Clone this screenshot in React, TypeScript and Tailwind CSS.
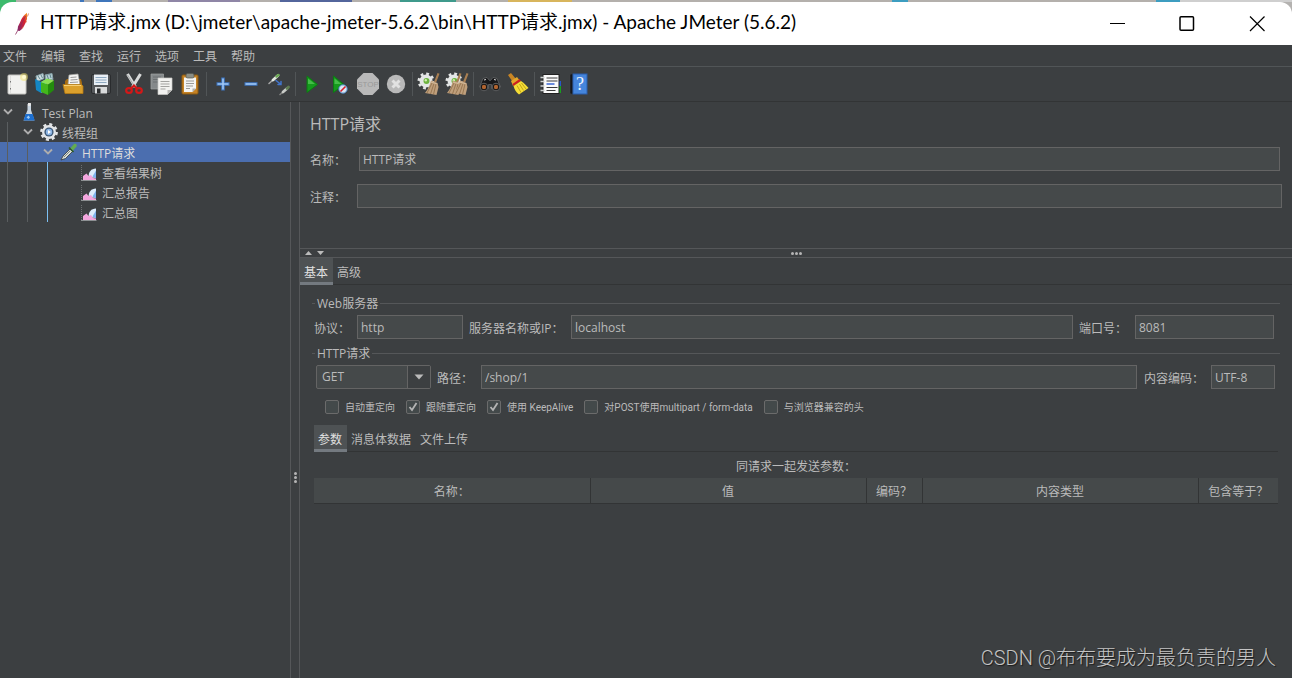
import React, { ReactNode } from 'react'
import { clsx } from 'clsx'

const menuItems = ['文件', '编辑', '查找', '运行', '选项', '工具', '帮助']

type TreeNode = {
  label: string
  depth: number
  icon: ReactNode
  leaf?: boolean
  selected?: boolean
}

const Feather = () => (
  <svg viewBox="0 0 16 24" className="h-6 w-4" aria-hidden="true">
    <defs>
      <linearGradient id="feather" x1="1" y1="0" x2="0" y2="1">
        <stop offset="0" stopColor="#f6a21c" />
        <stop offset="0.35" stopColor="#dd2430" />
        <stop offset="1" stopColor="#7b2470" />
      </linearGradient>
    </defs>
    <path
      d="M13 .8L11 2.500 9.500 4 7.500 7 6 10.500l-2 4-.5 4 2 .5 2.500-2 2-3 1.500-3 1.500-4z"
      fill="url(#feather)"
    />
    <path d="M11.500 4C8 11 4.500 17 1.500 22.500" stroke="#8c2b5c" strokeWidth="0.8" fill="none" />
    <path d="M14.500 1.500l-1 3M12.500 9l-1 2M9.500 14.500l-1.500 2" stroke="#e0663c" strokeWidth="0.8" />
  </svg>
)

const Broom = () => (
  <g>
    <path d="M20.500 1l2 .8-3.500 9-2-.8z" fill="#a97f52" />
    <path d="M14 8.500l6.500 2.500 1 4-2 8-11.500-2c3-3.500 4.500-7 6-12.500z" fill="#bf9f7c" />
    <path
      d="M15 11l-5 10M17 11.500l-3.500 10.500M19 12l-2.500 10.500"
      stroke="#86653f"
      strokeWidth="0.7"
    />
    <path d="M13.800 10l6.500 2" stroke="#d9c2a2" strokeWidth="0.8" />
  </g>
)

const Gear = () => (
  <g>
    <circle cx="9" cy="9" r="6.500" fill="#e4e6e6" />
    <circle
      cx="9"
      cy="9"
      r="7.200"
      fill="none"
      stroke="#e4e6e6"
      strokeWidth="2.600"
      strokeDasharray="2.800 2.850"
    />
    <circle cx="9.500" cy="9" r="3" fill="#6db33f" />
    <circle cx="8.800" cy="8.200" r="1.200" fill="#d0efb0" />
  </g>
)

const toolGroups: { name: string; art: ReactNode }[][] = [
  [
    {
      name: '新建',
      art: (
        <g>
          <rect x="3" y="3" width="18" height="19" rx="1" fill="#f1f1ef" stroke="#c4c4c0" />
          <path d="M5.500 4v17" stroke="#dededc" />
          <path d="M5.500 9v1.500M5.500 16v1.500" stroke="#777" />
          <circle cx="19" cy="5" r="4" fill="#f4e66b" opacity="0.5" />
          <circle cx="19" cy="5" r="2" fill="#fffbd0" />
        </g>
      ),
    },
    {
      name: '模板',
      art: (
        <g>
          <path d="M3 4l7-2.500 1 5-7 3z" fill="#cfdde0" stroke="#87a2a8" />
          <path d="M12 3l7-1.500 1 6-7 1z" fill="#b9d0d5" stroke="#87a2a8" />
          <path d="M5 4l2 3M8 3l1.500 3M14 3l1.500 4M17 2.500L18 6" stroke="#5f868e" />
          <path d="M2 7l6 3v11l-5-3z" fill="#1487c4" />
          <path d="M8 10l5-3v11l-5 3z" fill="#4cb9e8" />
          <path d="M8 10l7 2.500V23l-7-3z" fill="#43b61c" />
          <path d="M15 12.500l6-4V18l-6 5z" fill="#238b0d" />
          <path d="M8 10l6-3.500 7 2-6 4z" fill="#8be052" />
        </g>
      ),
    },
    {
      name: '打开',
      art: (
        <g>
          <path d="M4 9l2-2h14l1 4v9H4z" fill="#a86d11" />
          <path d="M8 3l9-1 2 11H7z" fill="#f5f5f3" stroke="#a9a9a5" strokeWidth="0.7" />
          <path d="M9.500 5.500l6-.5M9.500 8l7-.5M9 10.500l8-.5" stroke="#999" />
          <path d="M2 12.500h18.500L22 14v7.500H4z" fill="#dba02c" stroke="#b67b13" strokeWidth="0.8" />
          <path d="M3 13.500h17" stroke="#f6cf75" />
        </g>
      ),
    },
    {
      name: '保存',
      art: (
        <g>
          <rect x="2.500" y="2.500" width="19" height="19" rx="1.500" fill="#55585b" stroke="#2a2c2e" />
          <path d="M5 2.500h14V13H5z" fill="#e9eff5" />
          <path d="M6.500 5.500h11M6.500 8h11M6.500 10.500h11" stroke="#8faac2" />
          <path d="M6 15h12v6.500H6z" fill="#d9dbdc" />
          <path d="M8 16.500h3.500v5H8z" fill="#2b2d2f" />
        </g>
      ),
    },
  ],
  [
    {
      name: '剪切',
      art: (
        <g fill="none">
          <path d="M5.500 2l8 13M18.500 2L10.500 15" stroke="#d9dbdb" strokeWidth="3" />
          <path d="M5.500 3l7.500 12" stroke="#8e9191" strokeWidth="0.7" />
          <ellipse cx="7" cy="18.500" rx="2.800" ry="2.400" stroke="#d31818" strokeWidth="2.200" />
          <ellipse cx="17" cy="18.500" rx="2.800" ry="2.400" stroke="#d31818" strokeWidth="2.200" />
          <path d="M9 16.500l3-3 3 3" stroke="#d31818" strokeWidth="2.200" />
        </g>
      ),
    },
    {
      name: '复制',
      art: (
        <g>
          <path d="M1 2h12.500v15H1z" fill="#85898b" stroke="#a0a3a3" strokeWidth="0.7" />
          <path d="M3 5h8M3 7.500h8M3 10h5" stroke="#6c7072" />
          <path d="M8 6h14v12l-4.500 4.500H8z" fill="#f2f2f0" stroke="#c9c9c6" strokeWidth="0.7" />
          <path d="M10.500 9.500h9M10.500 12h9M10.500 14.500h9M10.500 17h5" stroke="#a3a3a1" />
          <path d="M22 18h-4.500v4.500z" fill="#b6b6b4" />
        </g>
      ),
    },
    {
      name: '粘贴',
      art: (
        <g>
          <rect x="4" y="3" width="16" height="19" rx="1" fill="#c58224" stroke="#8d5a10" />
          <path d="M6 5.500h12v11L14.500 20H6z" fill="#f4f4f2" />
          <path d="M8 9h8M8 11.500h8M8 14h7M8 16.500h4" stroke="#9a9a98" />
          <path d="M18 16.500h-3.500V20z" fill="#adadab" />
          <rect x="8" y="1.500" width="8" height="4.500" rx="1.500" fill="#8b8e86" stroke="#55574f" strokeWidth="0.7" />
        </g>
      ),
    },
  ],
  [
    {
      name: '展开全部',
      art: (
        <g>
          <path d="M12 5.500v13M5.500 12h13" stroke="#3d74bd" strokeWidth="3.600" />
          <path d="M12 6.500v11M6.500 12h11" stroke="#9fc8f7" strokeWidth="1.600" />
        </g>
      ),
    },
    {
      name: '折叠全部',
      art: (
        <g>
          <path d="M5.500 12h13" stroke="#3d74bd" strokeWidth="3.600" />
          <path d="M6.500 12h11" stroke="#9fc8f7" strokeWidth="1.600" />
        </g>
      ),
    },
    {
      name: '切换',
      art: (
        <g strokeLinecap="round">
          <path d="M2 11.500l4.500-4" stroke="#aaa" strokeWidth="1.500" />
          <path d="M6 8l5-4.500" stroke="#e3e8e1" strokeWidth="2.800" />
          <path d="M9.500 4.500L11.500 3" stroke="#6daa55" strokeWidth="2.500" />
          <path d="M9 8.500l5 4M14 9.500v3h-3" stroke="#4275cc" strokeWidth="1.500" fill="none" />
          <path d="M13 22.500l3-2.500" stroke="#888" strokeWidth="1.500" />
          <path d="M16 20l4-3.500" stroke="#c8cbc7" strokeWidth="2.800" />
          <path d="M20 16.500l1.500-1.500" stroke="#5f7d52" strokeWidth="2.800" />
        </g>
      ),
    },
  ],
  [
    {
      name: '启动',
      art: (
        <g>
          <path d="M7 4l10.500 8.500L7 20.500z" fill="#159a1d" stroke="#0c7a13" />
          <path d="M8 6.500l7 5.500H8z" fill="#45bd48" />
        </g>
      ),
    },
    {
      name: '不停顿开始',
      art: (
        <g>
          <path d="M5.500 4L16 12.500 5.500 20.500z" fill="#159a1d" stroke="#0c7a13" />
          <path d="M6.500 6.500l7 5.500h-7z" fill="#45bd48" />
          <circle cx="15" cy="17" r="4.200" fill="#d9e7f4" stroke="#4a83c0" strokeWidth="1" />
          <path d="M12.500 19.500l5-5" stroke="#d8202a" strokeWidth="1.600" />
        </g>
      ),
    },
    {
      name: '停止',
      art: (
        <g>
          <path d="M7.500 1h9L23 7.500v9L16.500 23h-9L1 16.500v-9z" fill="#b9b9b9" />
          <text
            x="12"
            y="15"
            textAnchor="middle"
            fontSize="8"
            fontFamily="Liberation Sans, sans-serif"
            fill="#999"
          >
            STOP
          </text>
        </g>
      ),
    },
    {
      name: '关闭',
      art: (
        <g>
          <circle cx="12" cy="12" r="9.200" fill="#b9b9b9" />
          <path d="M8.500 8.500l7 7M15.500 8.500l-7 7" stroke="#e2e2e2" strokeWidth="3" />
        </g>
      ),
    },
  ],
  [
    {
      name: '清除',
      art: (
        <g>
          <Gear />
          <Broom />
        </g>
      ),
    },
    {
      name: '清除全部',
      art: (
        <g>
          <Gear />
          <g transform="translate(-6 0)">
            <Broom />
          </g>
          <g transform="translate(1 0)">
            <Broom />
          </g>
        </g>
      ),
    },
  ],
  [
    {
      name: '查找',
      art: (
        <g>
          <path d="M5 6.500l4-1 2.500 3h1l2.500-3 4 1L22.500 15l-9 1.500v-4h-3v4l-9-1.500z" fill="#17181a" stroke="#6b6d6f" strokeWidth="0.7" />
          <circle cx="6" cy="15" r="3.800" fill="#111" stroke="#5c5e60" />
          <circle cx="18" cy="15" r="3.800" fill="#111" stroke="#5c5e60" />
          <circle cx="6" cy="15" r="2.200" fill="#b06430" />
          <circle cx="18" cy="15" r="2.200" fill="#b06430" />
          <path d="M6 8l2-.5M16 7.500l2 .5" stroke="#ddd" />
        </g>
      ),
    },
    {
      name: '重置搜索',
      art: (
        <g>
          <path d="M2 3l3-2 5 6-3.500 2.500z" fill="#c98524" />
          <path d="M5 9l6-4 3 4-7 5z" fill="#e3a72b" />
          <path d="M6.500 12l7-5 1.500 2-7.500 5z" fill="#cf2020" />
          <path d="M7.500 14L15 9c3 2 5 4 7.500 7L13 22.500c-3-2-4.500-5-5.500-8.500z" fill="#f5dd35" />
          <path d="M11 13.500l4 7M13.500 12l4 6.500M15.500 11l4.500 6" stroke="#b59310" strokeWidth="0.8" />
        </g>
      ),
    },
  ],
  [
    {
      name: '函数助手',
      art: (
        <g>
          <path d="M17 9h5v12h-5z" fill="#18a020" />
          <path d="M20 9h2v5h-2z" fill="#2858c8" />
          <rect x="4" y="2.500" width="16" height="19" fill="#fafafa" stroke="#222" />
          <path d="M7.500 6h11M7.500 9h11M7.500 15.500h11M7.500 18.500h9" stroke="#3a3a3a" />
          <path d="M7.500 12h8" stroke="#2a5bd0" strokeWidth="1.400" />
          <path d="M1.500 5.500h4M1.500 9.500h4M1.500 14h4M1.500 18.500h4" stroke="#cfd2d2" strokeWidth="1.500" />
        </g>
      ),
    },
    {
      name: '帮助',
      art: (
        <g>
          <path d="M3 2.500L6 1.500v21l-3-1z" fill="#14171c" stroke="#444" strokeWidth="0.5" />
          <rect x="6" y="2" width="14" height="20" fill="#4585dc" stroke="#2a5fae" />
          <text
            x="13"
            y="18"
            textAnchor="middle"
            fontSize="18"
            fontFamily="Liberation Serif, serif"
            fill="#eef5ff"
          >
            ?
          </text>
        </g>
      ),
    },
  ],
]

const FlaskIcon = () => (
  <svg viewBox="0 0 20 20" className="h-5 w-5" aria-hidden="true">
    <path d="M8.500 2h3.500v6l3.500 10.500h-11L8.500 8z" fill="#c9d6e2" />
    <path d="M6.500 12h7.200l2 6.500h-11z" fill="#1d6fd0" />
    <path d="M7.500 15.500l2-2 1.500 2-1.500 1.500z" fill="#9dcbf7" />
    <path d="M9 1h3l-.5 3H9z" fill="#e8e8e8" />
  </svg>
)

const GearIcon = () => (
  <svg viewBox="0 0 20 20" className="h-5 w-5" aria-hidden="true">
    <circle cx="10" cy="10" r="7" fill="#e4e6e8" />
    <circle
      cx="10"
      cy="10"
      r="7.600"
      fill="none"
      stroke="#e4e6e8"
      strokeWidth="2.600"
      strokeDasharray="3 2.970"
    />
    <circle cx="10" cy="10" r="4.600" fill="#3d5876" />
    <circle cx="10" cy="10" r="3.200" fill="#8db5e4" />
    <path d="M9 8l3 2-3 2z" fill="#fff" />
  </svg>
)

const PipetteIcon = () => (
  <svg viewBox="0 0 20 20" className="h-5 w-5" aria-hidden="true">
    <path d="M2 18l2-4 7-7 2.500 2.500-7 7z" fill="#d8dcd6" stroke="#33383a" strokeWidth="0.8" />
    <path d="M5 15l6-6" stroke="#7f8683" />
    <path d="M10 5.500l4.500 4.500" stroke="#2c5a24" strokeWidth="1.600" />
    <path d="M11.500 6l3.500-4c1.500-1 3.500.5 2.500 2.500L14 8.500z" fill="#63ab50" />
  </svg>
)

const ChartIcon = () => (
  <svg viewBox="0 0 20 20" className="h-5 w-5" aria-hidden="true">
    <path d="M2.500 3v15.500" stroke="#6c7072" strokeDasharray="1 1" />
    <path d="M2 18.500h15.500" stroke="#8d9193" />
    <path d="M9.500 15c0-5 2.500-8.500 7.500-8.500V16z" fill="#dcecfb" />
    <path d="M13.500 14.500l3.500-6v8z" fill="#7fb2ee" />
    <path d="M4 18v-4l3.500-2.500 2 2.500 2.500-1 2 3 3 .5V18z" fill="#f3a6de" />
  </svg>
)

const treeNodes: TreeNode[] = [
  { label: 'Test Plan', depth: 0, icon: <FlaskIcon /> },
  { label: '线程组', depth: 1, icon: <GearIcon /> },
  { label: 'HTTP请求', depth: 2, icon: <PipetteIcon />, selected: true },
  { label: '查看结果树', depth: 3, icon: <ChartIcon />, leaf: true },
  { label: '汇总报告', depth: 3, icon: <ChartIcon />, leaf: true },
  { label: '汇总图', depth: 3, icon: <ChartIcon />, leaf: true },
]

const options = [
  { label: '自动重定向', checked: false },
  { label: '跟随重定向', checked: true },
  { label: '使用 KeepAlive', checked: true },
  { label: '对POST使用multipart / form-data', checked: false },
  { label: '与浏览器兼容的头', checked: false },
]

const Dots = ({ vertical }: { vertical?: boolean }) => (
  <span className={clsx('flex gap-px', vertical && 'flex-col')}>
    <i className="size-[3px] rounded-full bg-[#b5b5b5]" />
    <i className="size-[3px] rounded-full bg-[#b5b5b5]" />
    <i className="size-[3px] rounded-full bg-[#b5b5b5]" />
  </span>
)

const Label = ({
  htmlFor,
  className,
  children,
}: {
  htmlFor: string
  className: string
  children: ReactNode
}) => (
  <label htmlFor={htmlFor} className={clsx('pt-1', className)}>
    {children}
  </label>
)

const Field = ({
  id,
  value = '',
  className,
}: {
  id: string
  value?: string
  className: string
}) => (
  <input
    id={id}
    type="text"
    defaultValue={value}
    className={clsx(
      'h-6 min-w-0 border border-[#646464] bg-[#45494a] px-[3px] text-xs outline-none',
      className,
    )}
  />
)

const Tabs = ({ items }: { items: string[] }) => (
  <div role="tablist" className="flex h-[27px] border-b border-[#323435]">
    {items.map((item, index) => (
      <button
        key={item}
        type="button"
        role="tab"
        aria-selected={index === 0}
        className={clsx(
          'h-[27px] pr-[5px] pl-1',
          index === 0
            ? 'border-b-3 border-[#747a80] bg-[#4e5254] pt-[5px] text-[#e0e0e0]'
            : 'pt-0.5',
        )}
      >
        {item}
      </button>
    ))}
  </div>
)

const TitleBar = () => (
  <header className="bg-linear-to-r from-[#3dba6c] from-1% to-[#b4b2b0] to-2%">
    <div className="flex h-0.5 bg-[#b4b0ac]" aria-hidden="true">
      <i className="w-4 bg-[#3dba6c]" />
      <i className="ml-16 w-1 bg-[#3f76bb]" />
      <i className="ml-3 w-4 bg-[#3f76bb]" />
      <i className="ml-14 w-18 bg-[#8f86a6]" />
      <i className="ml-10 w-18 bg-[#53659c]" />
      <i className="ml-12 w-14 bg-[#3f9a8c]" />
      <i className="ml-13 w-16 bg-[#d8b55c]" />
      <i className="ml-80 w-4 bg-[#3d9dc0]" />
      <i className="ml-auto w-6 bg-[#3d9dc0]" />
      <i className="w-28 bg-[#cfcfcf]" />
    </div>
    <div className="flex h-[43px] items-center rounded-t-xl bg-white pl-3.5 text-black">
      <Feather />
      <h1 className="mb-1 ml-2.5 flex-1 truncate font-[Lato,'Noto_Sans_CJK_SC',sans-serif] text-[19px]">
        HTTP请求.jmx (D:\jmeter\apache-jmeter-5.6.2\bin\HTTP请求.jmx) - Apache JMeter
        (5.6.2)
      </h1>
      <button type="button" aria-label="最小化" className="flex h-full w-[70px] items-center justify-center">
        <svg viewBox="0 0 16 16" className="size-4">
          <path d="M1 7.500h15" stroke="currentColor" />
        </svg>
      </button>
      <button type="button" aria-label="最大化" className="flex h-full w-[70px] items-center justify-center">
        <svg viewBox="0 0 16 16" className="size-4" fill="none">
          <rect x="1" y=".8" width="13.500" height="13.500" rx="1" stroke="currentColor" strokeWidth="1.500" />
        </svg>
      </button>
      <button type="button" aria-label="关闭" className="flex h-full w-[70px] items-center justify-center">
        <svg viewBox="0 0 16 16" className="size-4">
          <path d="M1 .500l14.500 14.500M15.500.500L1 15" stroke="currentColor" strokeWidth="1.200" />
        </svg>
      </button>
    </div>
  </header>
)

const Toolbar = () => (
  <div role="toolbar" className="flex h-[35px] items-center border-b border-[#323435] pl-[3px]">
    {toolGroups.map((group, index) => (
      <React.Fragment key={index}>
        {index > 0 && <span className="mx-0.5 h-6 w-px bg-[#515557]" />}
        {group.map((tool) => (
          <button
            key={tool.name}
            type="button"
            aria-label={tool.name}
            className="flex size-7 items-center justify-center"
          >
            <svg viewBox="0 0 24 24" className="size-6" fill="none">
              {tool.art}
            </svg>
          </button>
        ))}
      </React.Fragment>
    ))}
  </div>
)

const TreeRow = ({ node }: { node: TreeNode }) => (
  <li
    className={clsx('flex h-5 items-center', node.selected && 'bg-[#4b6eaf] text-[#dddddd]')}
  >
    {Array.from({ length: node.depth }, (_, level) => (
      <span key={level} className="h-5 w-5 pl-[7px]">
        <i
          className={clsx('block h-5 w-px', level === 2 ? 'bg-[#7cc0f2]' : 'bg-[#5a5e60]')}
        />
      </span>
    ))}
    <span className="w-4">
      {!node.leaf && (
        <svg viewBox="0 0 16 16" className="size-4" fill="none" aria-hidden="true">
          <path d="M4 5.500l4 4 4-4" stroke="#adadad" strokeWidth="1.800" />
        </svg>
      )}
    </span>
    <span className="mr-[3px] ml-[3px]">{node.icon}</span>
    <span className="pt-[3px]">{node.label}</span>
  </li>
)

const Tree = () => (
  <nav className="w-[291px] shrink-0 border-r border-[#555759]">
    <ul>
      {treeNodes.map((node) => (
        <TreeRow key={node.label} node={node} />
      ))}
    </ul>
  </nav>
)

const ParamsTable = () => (
  <table className="w-full table-fixed border-collapse">
    <caption className="h-[26px] pt-[3px] leading-[23px]">同请求一起发送参数：</caption>
    <thead>
      <tr className="h-[25px] border-b border-[#323435] bg-[#45494a]">
        <th className="border-r border-[#323435] pt-1 font-normal">名称：</th>
        <th className="border-r border-[#323435] pt-1 font-normal">值</th>
        <th className="w-14 border-r border-[#323435] pt-1 font-normal">编码？</th>
        <th className="border-r border-[#323435] pt-1 font-normal">内容类型</th>
        <th className="w-20 pt-1 font-normal">包含等于？</th>
      </tr>
    </thead>
  </table>
)

const Sampler = () => (
  <form className="px-3">
    <fieldset className="mt-2.5 border-t border-[#555759]">
      <legend className="ml-[3px] px-0.5 pt-0.5 leading-[14px]">Web服务器</legend>
      <div className="flex items-center pt-1 pr-1.5 pl-0.5">
        <Label htmlFor="protocol" className="w-[43px]">协议：</Label>
        <Field id="protocol" value="http" className="w-[106px]" />
        <Label htmlFor="server" className="ml-1.5 w-[102px]">服务器名称或IP：</Label>
        <Field id="server" value="localhost" className="flex-1" />
        <Label htmlFor="port" className="ml-1.5 w-14">端口号：</Label>
        <Field id="port" value="8081" className="w-[139px]" />
      </div>
    </fieldset>
    <fieldset className="mt-1.5 border-t border-[#555759]">
      <legend className="ml-[3px] px-0.5 pt-0.5 leading-[14px]">HTTP请求</legend>
      <div className="flex items-center pt-1 pr-[5px] pl-1">
        <div className="relative">
          <select
            aria-label="方法"
            defaultValue="GET"
            className="block h-6 w-[115px] appearance-none rounded-xs border border-[#646464] bg-[#45494a] pl-[5px] text-xs"
          >
            <option>GET</option>
            <option>POST</option>
          </select>
          <span className="pointer-events-none absolute inset-y-px right-px flex w-[23px] items-center justify-center border-l border-[#646464] bg-[#3c3f41]">
            <svg viewBox="0 0 10 6" className="h-1.5 w-2.5" aria-hidden="true">
              <path d="M.5.500h9L5 5.500z" fill="#bbb" />
            </svg>
          </span>
        </div>
        <Label htmlFor="path" className="ml-1.5 w-11">路径：</Label>
        <Field id="path" value="/shop/1" className="flex-1" />
        <Label htmlFor="encoding" className="ml-[7px] w-[67px]">内容编码：</Label>
        <Field id="encoding" value="UTF-8" className="w-16" />
      </div>
      <div className="mt-2.5 flex h-4 items-center gap-[11px] pl-[13px] font-[Roboto,'Noto_Sans_CJK_SC',sans-serif] text-[10px]">
        {options.map((option) => (
          <label key={option.label} className="flex items-center gap-1.5">
            <span className="relative size-3.5">
              <input
                type="checkbox"
                defaultChecked={option.checked}
                className="peer block size-3.5 appearance-none rounded-xs border border-[#6b6b6b] bg-[#43494a]"
              />
              <svg
                viewBox="0 0 14 14"
                className="pointer-events-none absolute inset-0 hidden size-3.5 peer-checked:block"
                fill="none"
                aria-hidden="true"
              >
                <path d="M3.500 7l2.500 3 4.500-7" stroke="#b5b5b5" strokeWidth="1.800" />
              </svg>
            </span>
            <span className="pt-0.5">{option.label}</span>
          </label>
        ))}
      </div>
    </fieldset>
    <div className="mx-0.5 mt-[10px]">
      <Tabs items={['参数', '消息体数据', '文件上传']} />
      <ParamsTable />
    </div>
  </form>
)

export default function App() {
  return (
    <div className="relative flex min-h-screen flex-col bg-[#3c3f41] font-['Open_Sans','Noto_Sans_CJK_SC',sans-serif] text-xs text-[#bbbbbb]">
      <TitleBar />
      <nav className="flex h-[22px] items-center gap-3.5 border-b border-[#515557] pt-0.5 pl-[3px]">
        {menuItems.map((item) => (
          <button key={item} type="button">
            {item}
          </button>
        ))}
      </nav>
      <Toolbar />
      <div className="flex flex-1">
        <Tree />
        <div className="flex w-2 shrink-0 items-center justify-center pt-[174px]">
          <Dots vertical />
        </div>
        <main className="min-w-0 flex-1 border-l border-[#555759]">
          <section className="h-[146px] pt-2.5 pl-2.5">
            <h2 className="text-base/6">HTTP请求</h2>
            <div className="mt-[11px] flex items-center pr-3">
              <Label htmlFor="name" className="w-[49px]">名称：</Label>
              <Field id="name" value="HTTP请求" className="flex-1" />
            </div>
            <div className="mt-[13px] flex items-center pr-2.5">
              <Label htmlFor="comment" className="w-[47px]">注释：</Label>
              <Field id="comment" className="flex-1" />
            </div>
          </section>
          <div className="relative flex h-2.5 items-center justify-center border-y border-[#555759]">
            <svg viewBox="0 0 20 6" className="absolute left-1 h-1.5 w-5" aria-hidden="true">
              <path d="M1 5l3.500-4L8 5zM13 1h7l-3.500 4z" fill="#bbb" />
            </svg>
            <Dots />
          </div>
          <Tabs items={['基本', '高级']} />
          <Sampler />
        </main>
      </div>
      <p className="absolute right-4 bottom-1.5 font-[Roboto,'Noto_Sans_CJK_SC',sans-serif] text-xl font-light text-[#c4c4c4] [text-shadow:1px_1px_1px_#1c1c1c]">
        CSDN @布布要成为最负责的男人
      </p>
    </div>
  )
}
